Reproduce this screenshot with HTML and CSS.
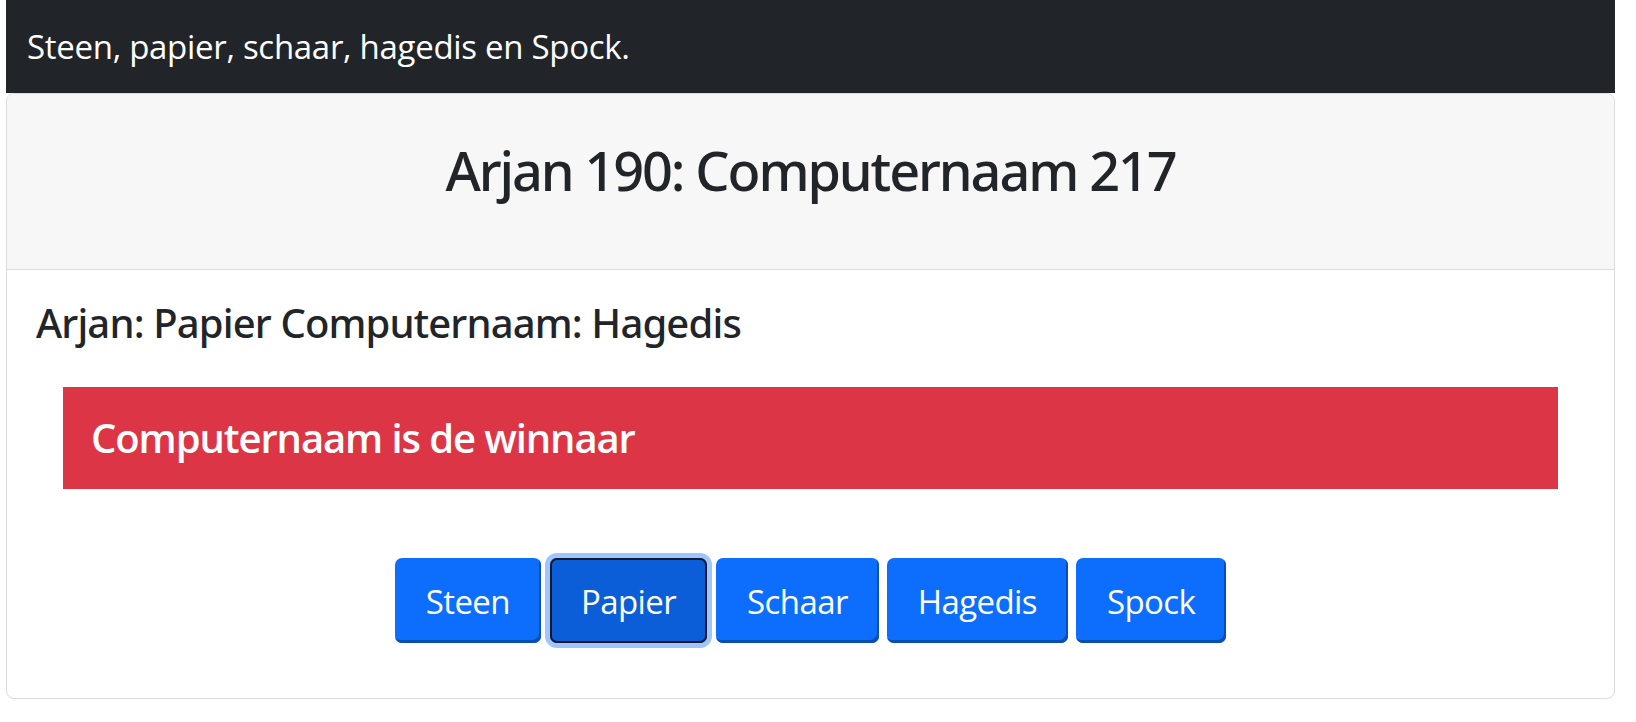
FILE: index.html
```html
<!DOCTYPE html>
<html lang="nl">
<head>
<meta charset="utf-8">
<title>Steen, papier, schaar, hagedis en Spock.</title>
<link rel="stylesheet" href="styles.css">
</head>
<body>
<div class="page">
  <nav class="navbar">
    <span class="brand">Steen, papier, schaar, hagedis en Spock.</span>
  </nav>
  <main class="card">
    <header class="card-header">
      <h1 class="score">Arjan 190: Computernaam 217</h1>
    </header>
    <section class="card-body">
      <h3 class="choices">Arjan: Papier Computernaam: Hagedis</h3>
      <div class="alert">
        <h3 class="alert-text">Computernaam is de winnaar</h3>
      </div>
      <div class="buttons">
        <button class="btn">Steen</button>
        <button class="btn active">Papier</button>
        <button class="btn">Schaar</button>
        <button class="btn">Hagedis</button>
        <button class="btn">Spock</button>
      </div>
    </section>
  </main>
</div>
</body>
</html>
```
FILE: styles.css
```css
* { box-sizing: border-box; }
html, body {
  margin: 0;
  padding: 0;
  background: #ffffff;
}
body {
  font-family: "Open Sans", "Noto Sans", sans-serif;
  color: #212529;
}
.page {
  width: 1609px;
  margin-left: 6px;
}
.navbar {
  height: 93px;
  background: #212529;
  display: flex;
  align-items: center;
  padding-left: 21px;
}
.brand {
  color: #ffffff;
  font-size: 33px;
  letter-spacing: -0.3px;
  line-height: 1;
}
.card {
  border: 1px solid #dcdcdc;
  border-radius: 8px;
  height: 606px;
  display: flex;
  flex-direction: column;
}
.card-header {
  height: 176px;
  background: #f7f7f7;
  border-bottom: 1px solid #dcdcdc;
  border-radius: 8px 8px 0 0;
  display: flex;
  justify-content: center;
  padding-top: 44px;
}
.score {
  margin: 0;
  font-family: "Noto Sans", "Open Sans", sans-serif;
  font-size: 54px;
  font-weight: 500;
  letter-spacing: -2.1px;
  line-height: 1.2;
}
.card-body {
  padding: 29px 56px 0 56px;
}
.choices {
  margin: 0 0 0 -27px;
  font-family: "Noto Sans", "Open Sans", sans-serif;
  font-size: 40px;
  font-weight: 500;
  letter-spacing: -0.85px;
  line-height: 1.2;
}
.alert {
  margin-top: 40px;
  height: 102px;
  background: #dc3545;
  display: flex;
  align-items: center;
  padding-left: 28px;
}
.alert-text {
  margin: 0;
  color: #ffffff;
  font-size: 40px;
  font-weight: 600;
  letter-spacing: -1.1px;
  line-height: 1.2;
}
.buttons {
  margin-top: 69px;
  display: flex;
  justify-content: center;
  gap: 8px;
}
.btn {
  font-family: inherit;
  font-size: 33px;
  letter-spacing: -0.6px;
  line-height: 1;
  color: #ffffff;
  background: #0d6efd;
  border: none;
  border-radius: 7px;
  height: 85px;
  padding: 2px 31px 0;
  box-shadow: inset -2px -3px 0 #0a4fae;
}
.btn.active {
  background: #0b5ed7;
  box-shadow: inset 0 0 0 2px #121a2a, 0 0 0 5px #9ec5fe;
  margin: 0 1px;
}
```
